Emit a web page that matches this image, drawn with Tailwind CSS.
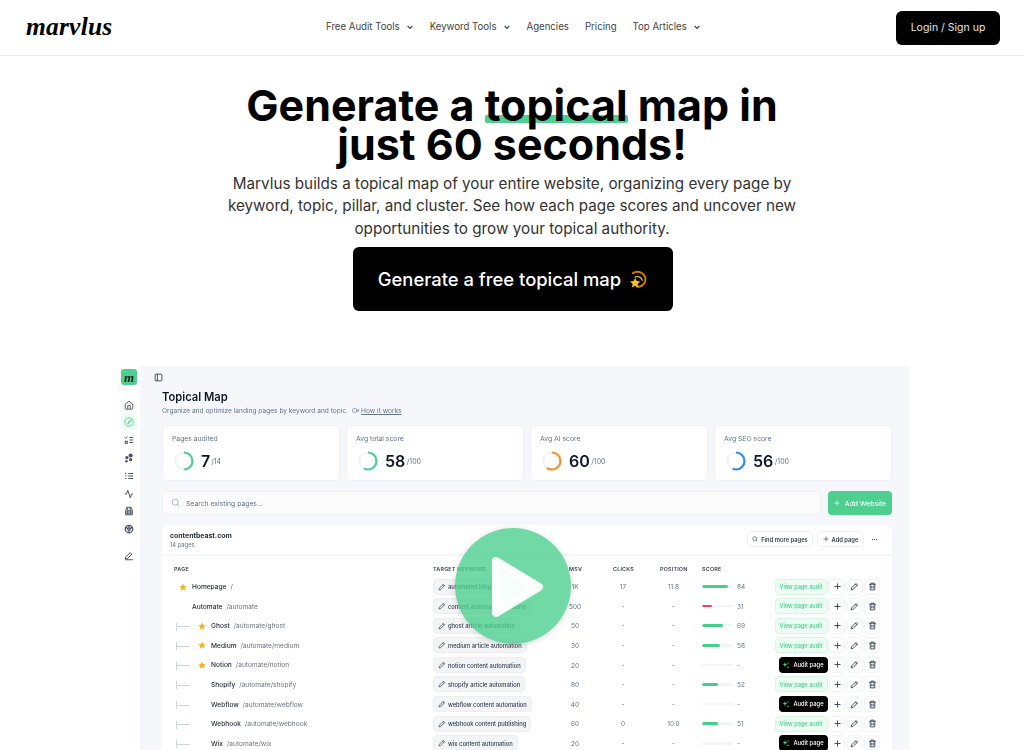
<!DOCTYPE html>
<html lang="en">
<head>
  <meta charset="UTF-8">
  <title>Marvlus</title>
  <script src="https://cdn.jsdelivr.net/npm/@tailwindcss/browser@4"></script>
</head>
<body class="bg-white h-[750px] overflow-hidden font-[Inter,sans-serif] text-black">
  <!-- Header -->
  <header class="h-[56px] border-b border-[#ececec] flex items-center pl-[26px] pr-[24px]">
    <span class="font-['Liberation_Serif',serif] italic font-bold text-[25.500px] tracking-[0.2px] leading-none w-[300px] pb-[1px]">marvlus</span>
    <nav class="flex items-center text-[9.650px] text-[#444]">
      <span class="flex items-center gap-[6px] mr-[16px]">Free Audit Tools
        <svg class="w-[8px] h-[8px]" viewBox="0 0 24 24" fill="none" stroke="#444" stroke-width="3.500"><path d="m5 9 7 7 7-7"/></svg></span>
      <span class="flex items-center gap-[6px] mr-[16px]">Keyword Tools
        <svg class="w-[8px] h-[8px]" viewBox="0 0 24 24" fill="none" stroke="#444" stroke-width="3.500"><path d="m5 9 7 7 7-7"/></svg></span>
      <span class="mr-[16px]">Agencies</span>
      <span class="mr-[16px]">Pricing</span>
      <span class="flex items-center gap-[6px]">Top Articles
        <svg class="w-[8px] h-[8px]" viewBox="0 0 24 24" fill="none" stroke="#444" stroke-width="3.500"><path d="m5 9 7 7 7-7"/></svg></span>
    </nav>
    <button class="ml-auto w-[104px] h-[34px] bg-black text-white/90 rounded-[6px] text-[10.500px]">Login / Sign up</button>
  </header>

  <!-- Hero -->
  <section class="flex flex-col items-center">
    <h1 class="mt-[30px] text-[43px] leading-[39px] font-bold text-center">
      Generate a <span class="relative inline-block"><span class="absolute left-0 right-0 top-[29px] h-[8px] rounded-[2px] bg-[#4ccf8f]"></span><span class="relative">topical</span></span> map in<br>just 60 seconds!
    </h1>
    <p class="mt-[9px] text-[15.250px] leading-[22.400px] text-[#333] text-center w-[600px]">
      Marvlus builds a topical map of your entire website, organizing every page by keyword, topic, pillar, and cluster. See how each page scores and uncover new opportunities to grow your topical authority.
    </p>
    <a class="mt-[7px] ml-[1px] w-[320px] h-[64px] bg-black text-white rounded-[6px] flex items-center justify-center gap-[7px] text-[18.400px] font-medium">
      <span class="pt-[2px]">Generate a free topical map</span>
      <svg class="w-[19px] h-[19px]" viewBox="0 0 24 24" fill="none">
        <path d="M6 4c6-4 15-1 16 7 .5 6-5 11-11 10" stroke="#d97706" stroke-width="2.400" stroke-linecap="round"/>
        <path d="M9 9c4-2 8 0 9 4" stroke="#fcd34d" stroke-width="1.5" stroke-linecap="round"/>
        <path d="m9 10 2 4 4.500 .6-3.300 3.100.8 4.500L9 20l-4 2.200.8-4.500L2.500 14.600 7 14z" fill="#fbbf24"/>
      </svg>
    </a>
  </section>

  <!-- Product screenshot -->
  <section class="relative mt-[55px] ml-[112px] w-[797px] h-[384px] overflow-hidden">
    <div id="mock" class="flex h-full blur-[0.45px]">
      <aside class="w-[28px] pl-[6px] bg-white flex flex-col items-center text-[#4b5563]">
        <div class="mt-[3px] w-[16px] h-[16px] rounded-[3px] bg-[#4ccf8f] flex items-center justify-center font-['Liberation_Serif',serif] italic font-bold text-[13px] leading-none text-[#10241a]">m</div>
        <div class="mt-[4px] w-full border-t border-[#f3f4f6]"></div>
        <svg class="mt-[10px] w-[10px] h-[10px]" viewBox="0 0 24 24" fill="none" stroke="currentColor" stroke-width="2.200"><path d="M3 10l9-7 9 7v10a2 2 0 0 1-2 2H5a2 2 0 0 1-2-2z"/><path d="M9 22v-9h6v9"/></svg>
        <div class="mt-[4px] w-[16px] h-[16px] rounded-[4px] bg-[#ecfdf3] flex items-center justify-center text-[#4ccf8f]">
          <svg class="w-[10px] h-[10px]" viewBox="0 0 24 24" fill="none" stroke="currentColor" stroke-width="2.200"><circle cx="12" cy="12" r="10"/><path d="m16 8-5 3-2 5 5-3z"/></svg>
        </div>
        <svg class="mt-[4.500px] w-[10px] h-[10px]" viewBox="0 0 24 24" fill="none" stroke="currentColor" stroke-width="2.400"><path d="M13 6h9M13 12h9M13 18h9"/><path d="m2 6 2 2 4-4"/><rect x="3" y="15" width="5" height="5"/></svg>
        <svg class="mt-[8.500px] w-[10px] h-[10px]" viewBox="0 0 24 24" fill="currentColor"><circle cx="16" cy="6" r="5"/><circle cx="7" cy="11" r="4"/><circle cx="16" cy="16" r="4"/><circle cx="6" cy="20" r="3"/></svg>
        <svg class="mt-[8px] w-[10px] h-[10px]" viewBox="0 0 24 24" fill="none" stroke="currentColor" stroke-width="2.400"><path d="M10 6h12M10 12h12M10 18h12M4 4v4M3 12h3M3 18h3"/></svg>
        <svg class="mt-[7.500px] w-[10px] h-[10px]" viewBox="0 0 24 24" fill="none" stroke="currentColor" stroke-width="2.400"><path d="M22 12h-4l-3 9L9 3l-3 9H2"/></svg>
        <svg class="mt-[7.500px] w-[10px] h-[10px]" viewBox="0 0 24 24" fill="none" stroke="currentColor" stroke-width="2.400"><path d="M7 3h10l3 8v10H4V11z"/><path d="M4 12h16M4 17h16M9 3v18M15 3v18"/></svg>
        <svg class="mt-[8px] w-[10px] h-[10px]" viewBox="0 0 24 24" fill="none" stroke="currentColor" stroke-width="3"><circle cx="12" cy="12" r="9"/><circle cx="12" cy="12" r="3"/><path d="M12 3v6M4 8l6 3M20 8l-6 3M12 21v-6"/></svg>
        <svg class="mt-[17px] w-[10px] h-[10px]" viewBox="0 0 24 24" fill="none" stroke="currentColor" stroke-width="2.400"><path d="M3 21h18"/><path d="M15 4l4 4L8 18l-5 1 1-5z"/></svg>
      </aside>

      <main class="flex-1 bg-[#f5f7fb] pl-[22px] pr-[17px]">
        <svg class="mt-[6.500px] -ml-[8.500px] w-[9px] h-[9px]" viewBox="0 0 24 24" fill="none" stroke="#374151" stroke-width="2.400"><rect x="3" y="3" width="18" height="18" rx="2"/><path d="M9 3v18"/></svg>
        <h2 class="mt-[8px] text-[11.200px] leading-[14px] font-semibold text-[#111827]">Topical Map</h2>
        <p class="mt-[1px] flex items-center text-[6.600px] leading-[10px] text-[#64748b]"><span class="pt-[1px]">Organize and optimize landing pages by keyword and topic.</span>
          <svg class="ml-[4px] mr-[2px] w-[7px] h-[7px]" viewBox="0 0 24 24" fill="none" stroke="#64748b" stroke-width="2"><rect x="2" y="6" width="14" height="12" rx="2"/><path d="m22 8-6 4 6 4z"/></svg>
          <span class="underline pt-[1px]">How it works</span></p>

        <!-- Stat cards -->
        <div class="mt-[9px] grid grid-cols-4 gap-[6px] h-[56px]">
          <div class="bg-white rounded-[6px] border border-[#eef0f5] pl-[9px] pt-[8px]">
            <p class="text-[6.800px] leading-[10px] text-[#64748b]">Pages audited</p>
            <div class="mt-[5px] ml-[2px] flex items-center gap-[7px]">
              <svg class="w-[20px] h-[20px] -rotate-90" viewBox="0 0 20 20" fill="none"><circle cx="10" cy="10" r="8.500" stroke="#f1f3f7" stroke-width="2"/><circle cx="10" cy="10" r="8.500" stroke="#4ccf8f" stroke-width="2.200" stroke-dasharray="26.700 53.400"/></svg>
              <span class="text-[16px] font-semibold text-[#111827]">7</span><span class="-ml-[6px] mt-[4px] text-[7px] text-[#64748b]">/14</span>
            </div>
          </div>
          <div class="bg-white rounded-[6px] border border-[#eef0f5] pl-[9px] pt-[8px]">
            <p class="text-[6.800px] leading-[10px] text-[#64748b]">Avg total score</p>
            <div class="mt-[5px] ml-[2px] flex items-center gap-[7px]">
              <svg class="w-[20px] h-[20px] -rotate-90" viewBox="0 0 20 20" fill="none"><circle cx="10" cy="10" r="8.500" stroke="#f1f3f7" stroke-width="2"/><circle cx="10" cy="10" r="8.500" stroke="#4ccf8f" stroke-width="2.200" stroke-dasharray="31 53.400"/></svg>
              <span class="text-[16px] font-semibold text-[#111827]">58</span><span class="-ml-[5.500px] mt-[4px] text-[7px] text-[#64748b]">/100</span>
            </div>
          </div>
          <div class="bg-white rounded-[6px] border border-[#eef0f5] pl-[9px] pt-[8px]">
            <p class="text-[6.800px] leading-[10px] text-[#64748b]">Avg AI score</p>
            <div class="mt-[5px] ml-[2px] flex items-center gap-[7px]">
              <svg class="w-[20px] h-[20px] -rotate-90" viewBox="0 0 20 20" fill="none"><circle cx="10" cy="10" r="8.500" stroke="#f1f3f7" stroke-width="2"/><circle cx="10" cy="10" r="8.500" stroke="#f7902a" stroke-width="2.200" stroke-dasharray="32 53.400"/></svg>
              <span class="text-[16px] font-semibold text-[#111827]">60</span><span class="-ml-[5.500px] mt-[4px] text-[7px] text-[#64748b]">/100</span>
            </div>
          </div>
          <div class="bg-white rounded-[6px] border border-[#eef0f5] pl-[9px] pt-[8px]">
            <p class="text-[6.800px] leading-[10px] text-[#64748b]">Avg SEO score</p>
            <div class="mt-[5px] ml-[2px] flex items-center gap-[7px]">
              <svg class="w-[20px] h-[20px] -rotate-90" viewBox="0 0 20 20" fill="none"><circle cx="10" cy="10" r="8.500" stroke="#f1f3f7" stroke-width="2"/><circle cx="10" cy="10" r="8.500" stroke="#2b8df0" stroke-width="2.200" stroke-dasharray="30 53.400"/></svg>
              <span class="text-[16px] font-semibold text-[#111827]">56</span><span class="-ml-[5.500px] mt-[4px] text-[7px] text-[#64748b]">/100</span>
            </div>
          </div>
        </div>

        <!-- Search -->
        <div class="mt-[10px] flex gap-[7px] h-[24px]">
          <div class="flex-1 bg-[#fcfcfd] border border-[#eef0f5] rounded-[4px] flex items-center pl-[8px] gap-[6px] text-[6.800px] text-[#64748b]">
            <svg class="w-[9px] h-[9px]" viewBox="0 0 24 24" fill="none" stroke="#94a3b8" stroke-width="2"><circle cx="11" cy="11" r="8"/><path d="m21 21-4.300-4.300"/></svg>
            <span class="pt-[2px]">Search existing pages...</span>
          </div>
          <button class="w-[64px] bg-[#4ccf8f] rounded-[4px] flex items-center justify-center gap-[5px] text-white text-[6.800px] font-medium">
            <svg class="w-[6px] h-[6px]" viewBox="0 0 24 24" fill="none" stroke="white" stroke-width="2.500"><path d="M12 2v20M2 12h20"/></svg>
            <span class="pt-[2px]">Add Website</span>
          </button>
        </div>

        <!-- Table card -->
        <div class="mt-[10px] bg-white rounded-t-[6px] h-[300px]">
          <div class="h-[31px] border-b-2 border-[#f5f7fb] flex items-center pl-[8px] pr-[12px]">
            <div class="pt-[2px]">
              <p class="text-[6.900px] leading-[9px] font-bold text-[#1f2937]">contentbeast.com</p>
              <p class="mt-[1px] text-[5.800px] leading-[8px] text-[#64748b]">14 pages</p>
            </div>
            <button class="ml-auto w-[66px] h-[16px] bg-white border border-[#eef0f5] rounded-[4px] flex items-center justify-center gap-[3px] text-[5.800px] font-semibold text-[#374151]">
              <svg class="w-[6px] h-[6px]" viewBox="0 0 24 24" fill="none" stroke="#374151" stroke-width="2.500"><circle cx="11" cy="11" r="8"/><path d="m21 21-4.300-4.300"/></svg>
              <span class="pt-[2px]">Find more pages</span>
            </button>
            <button class="ml-[4px] w-[47px] h-[16px] bg-white border border-[#eef0f5] rounded-[4px] flex items-center justify-center gap-[3px] text-[5.800px] font-semibold text-[#374151]">
              <svg class="w-[6px] h-[6px]" viewBox="0 0 24 24" fill="none" stroke="#374151" stroke-width="2.500"><path d="M12 2v20M2 12h20"/></svg>
              <span class="pt-[2px]">Add page</span>
            </button>
            <span class="ml-[8px] mr-[3px] flex gap-[1px]"><i class="w-[1px] h-[1px] bg-[#374151]"></i><i class="w-[1px] h-[1px] bg-[#374151]"></i><i class="w-[1px] h-[1px] bg-[#374151]"></i></span>
          </div>
          <div class="mt-[8px] h-[10px] flex items-center pl-[12px] text-[5.400px] font-semibold tracking-[0.2px] text-[#374151]">
            <span class="w-[259px]">PAGE</span>
            <span class="w-[136px]">TARGET KEYWORD</span>
            <span class="w-[44px]">MSV</span>
            <span class="w-[47px]">CLICKS</span>
            <span class="w-[42px]">POSITION</span>
            <span>SCORE</span>
          </div>
          <div id="rows" class="mt-[3px]"></div>
        </div>
      </main>
    </div>

    <!-- Play button over the video -->
    <div class="absolute left-[343px] top-[162px] w-[116px] h-[116px] rounded-full bg-[#4ccf8f]/80 shadow-[0_1px_6px_rgba(0,0,0,0.15)]">
      <svg class="w-[116px] h-[116px]" viewBox="0 0 116 116"><path d="M41 33 84 59 41 85z" fill="#fff" fill-opacity="0.95" stroke="#fff" stroke-opacity="0.95" stroke-width="8" stroke-linejoin="round"/></svg>
    </div>
  </section>

  <script>
    // Rows of the topical map table
    const pencil = '<path d="M3 21l1-5L16 4l4 4L8 20z"/><path d="m14 6 4 4"/>';
    const pages = [
      { name: 'Homepage', path: '/', star: true, keyword: 'automated blog writer', msv: '1K', clicks: '17', pos: '11.8', score: 84 },
      { name: 'Automate', path: '/automate', keyword: 'content automation platform', msv: '500', clicks: '-', pos: '-', score: 31 },
      { name: 'Ghost', path: '/automate/ghost', tree: true, star: true, keyword: 'ghost article automation', msv: '50', clicks: '-', pos: '-', score: 69 },
      { name: 'Medium', path: '/automate/medium', tree: true, star: true, keyword: 'medium article automation', msv: '30', clicks: '-', pos: '-', score: 58 },
      { name: 'Notion', path: '/automate/notion', tree: true, star: true, keyword: 'notion content automation', msv: '20', clicks: '-', pos: '-', score: null },
      { name: 'Shopify', path: '/automate/shopify', tree: true, keyword: 'shopify article automation', msv: '80', clicks: '-', pos: '-', score: 52 },
      { name: 'Webflow', path: '/automate/webflow', tree: true, keyword: 'webflow content automation', msv: '40', clicks: '-', pos: '-', score: null },
      { name: 'Webhook', path: '/automate/webhook', tree: true, keyword: 'webhook content publishing', msv: '60', clicks: '0', pos: '10.0', score: 51 },
      { name: 'Wix', path: '/automate/wix', tree: true, keyword: 'wix content automation', msv: '20', clicks: '-', pos: '-', score: null },
    ];
    const star = '<svg class="w-[8px] h-[8px]" viewBox="1 1 22 22" fill="#fbb024"><path d="m12 2 3 7 7.500 .7-5.700 5 1.700 7.300L12 18.200 5.500 22l1.700-7.300-5.700-5L9 9z"/></svg>';
    const iconBtn = inner => `<span class="w-[16px] h-[16px] border border-[#f1f3f7] rounded-[4px] flex items-center justify-center"><svg class="w-[9px] h-[9px]" viewBox="0 0 24 24" fill="none" stroke="#374151" stroke-width="2.400">${inner}</svg></span>`;

    document.getElementById('rows').innerHTML = pages.map(p => `
      <div class="h-[19.600px] flex items-center pl-[12px] pr-[12px]">
        <div class="w-[259px] flex items-center text-[6.600px] font-medium text-[#1f2937]">
          ${p.tree
            ? `<span class="ml-[2px] mt-[2px] w-[14px] h-[8px] flex items-center border-l border-[#cbd5e1]"><span class="w-full border-t border-[#cbd5e1]"></span></span><span class="w-[8px] ml-[8px] flex">${p.star ? star : ''}</span><span class="ml-[5px] pt-[3px]">${p.name}</span>`
            : `<span class="w-[8px] ml-[5px] flex">${p.star ? star : ''}</span><span class="ml-[5px] pt-[3px]">${p.name}</span>`}
          <span class="ml-[4px] pt-[3px] font-normal text-[#6b7280]">${p.path}</span>
        </div>
        <div class="w-[136px] flex">
          <span class="flex items-center gap-[2px] h-[16px] px-[4px] bg-[#f3f4f6] border border-[#eceef2] rounded-[4px] text-[5.800px] font-medium text-[#374151]">
            <svg class="w-[8px] h-[8px]" viewBox="0 0 24 24" fill="none" stroke="#4b5563" stroke-width="2.400">${pencil}</svg><span class="pt-[2px]">${p.keyword}</span>
          </span>
        </div>
        <span class="w-[12px] mr-[32px] pt-[3px] text-center text-[6.500px] text-[#64748b]">${p.msv}</span>
        <span class="w-[20px] mr-[27px] pt-[3px] text-center text-[6.500px] text-[#64748b]">${p.clicks}</span>
        <span class="w-[27px] mr-[15px] pt-[3px] text-center text-[6.500px] text-[#64748b]">${p.pos}</span>
        <div class="flex items-center gap-[4px] text-[6.500px] text-[#64748b]">
          <span class="block w-[31px] h-[2.500px] rounded-full bg-[#f1f5f9] overflow-hidden"><span class="block h-full rounded-full ${p.score !== null && p.score < 40 ? 'bg-[#f43f5e]' : 'bg-[#45cf88]'}" style="width:${p.score || 0}%"></span></span>
          <span class="pt-[3px]">${p.score === null ? '-' : p.score}</span>
        </div>
        <div class="ml-auto flex items-center gap-[1.500px]">
          ${p.score === null
            ? `<span class="w-[49px] h-[16px] bg-black rounded-[4px] flex items-center justify-center gap-[3px] text-white text-[5.800px] font-medium"><svg class="w-[8px] h-[8px]" viewBox="0 0 24 24" fill="#4ccf8f"><path d="M9 3l2 6 6 2-6 2-2 6-2-6-6-2 6-2z"/><path d="M18 2l1 3 3 1-3 1-1 3-1-3-3-1 3-1zM18 15l1 3 3 1-3 1-1 3-1-3-3-1 3-1z"/></svg><span class="pt-[1px]">Audit page</span></span>`
            : `<span class="w-[53px] h-[16px] pt-[1px] bg-[#ecfdf3] border border-[#d6f5e3] rounded-[4px] flex items-center justify-center text-[#4ccf8f] text-[5.600px] font-medium">View page audit</span>`}
          ${iconBtn('<path d="M12 4v16M4 12h16"/>')}
          ${iconBtn(pencil)}
          ${iconBtn('<path d="M3 6h18M8 6V3h8v3M6 6v15h12V6M10 10v7M14 10v7"/>')}
        </div>
      </div>`).join('');
  </script>
</body>
</html>
